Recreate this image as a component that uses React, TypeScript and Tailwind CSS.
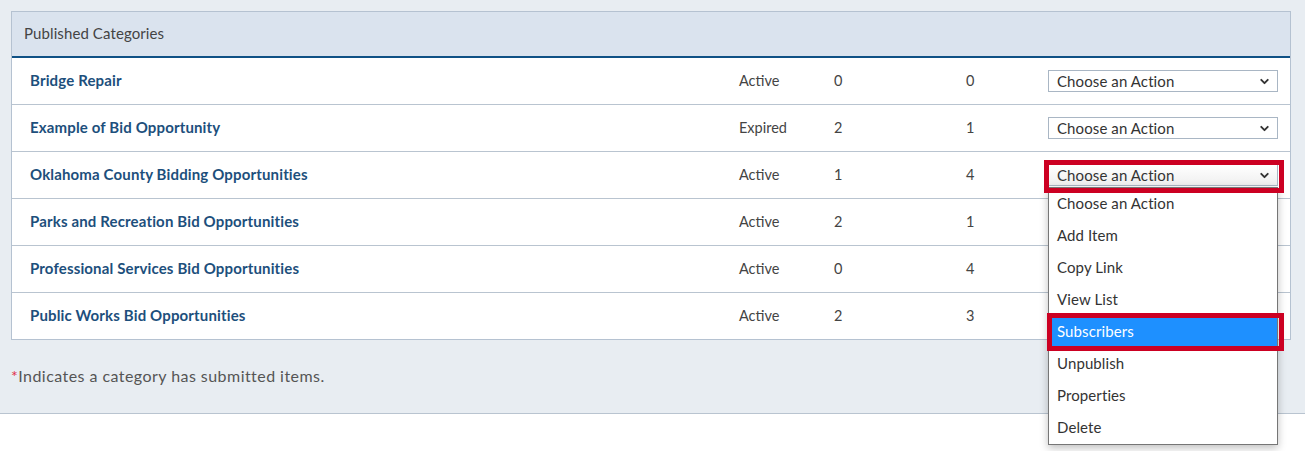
import { ChevronDown } from "lucide-react"

interface Category {
  name: string
  status: string
  items: number
  subscribers: number
}

const categories: Category[] = [
  { name: "Bridge Repair", status: "Active", items: 0, subscribers: 0 },
  { name: "Example of Bid Opportunity", status: "Expired", items: 2, subscribers: 1 },
  { name: "Oklahoma County Bidding Opportunities", status: "Active", items: 1, subscribers: 4 },
  { name: "Parks and Recreation Bid Opportunities", status: "Active", items: 2, subscribers: 1 },
  { name: "Professional Services Bid Opportunities", status: "Active", items: 0, subscribers: 4 },
  { name: "Public Works Bid Opportunities", status: "Active", items: 2, subscribers: 3 },
]

const actions = [
  "Choose an Action",
  "Add Item",
  "Copy Link",
  "View List",
  "Subscribers",
  "Unpublish",
  "Properties",
  "Delete",
]

function ActionSelect({ open = false }: { open?: boolean }) {
  return (
    <div
      className={
        "flex h-[22px] w-[230px] items-center justify-between border border-[#a9b6c4] pl-[8px] pr-[6px] text-[15px] leading-none text-[#333] " +
        (open ? "bg-gradient-to-b from-white to-[#efefef]" : "bg-white")
      }
    >
      <span className="tracking-[0.1px]">Choose an Action</span>
      <ChevronDown size={13} strokeWidth={3.5} className="text-[#333]" />
    </div>
  )
}

export default function App() {
  return (
    <div className="relative h-[451px] w-[1305px] overflow-hidden bg-white font-['Lato',sans-serif]">
      <div className="h-[414px] border-b border-[#b9c4d0] bg-[#e8edf2] pt-[11px]">
        <div className="ml-[11px] w-[1280px] border border-[#b5c2d1] bg-white">
          <div className="flex h-[46px] items-center border-b-2 border-[#0f5185] bg-[#dae3ee] pb-[1px] pl-[12px] text-[15px] tracking-[0.1px] text-[#444]">
            Published Categories
          </div>
          {categories.map((c, i) => (
            <div
              key={c.name}
              className={
                "grid grid-cols-[709px_95px_132px_82px_230px] items-center pl-[18px] text-[14.5px] " +
                (i < categories.length - 1 ? "h-[47px] border-b border-[#b9c4d0]" : "h-[46px]")
              }
            >
              <span className="pb-[2px] text-[15px] font-bold tracking-[0.15px] text-[#1d4f7c]">{c.name}</span>
              <span className="text-[#444]">{c.status}</span>
              <span className="pb-[1px] text-[#444]">{c.items}</span>
              <span className="pb-[1px] text-[#444]">{c.subscribers}</span>
              <ActionSelect open={i === 2} />
            </div>
          ))}
        </div>
        <p className="mt-[25px] pl-[11px] text-[16px] leading-[22px] tracking-[0.45px] text-[#555]">
          <span className="text-[#e0304a]">*</span>Indicates a category has submitted items.
        </p>
      </div>

      {/* open dropdown list */}
      <div className="absolute left-[1048px] top-[187px] w-[230px] border border-[#767676] bg-white text-[15px] text-[#333] shadow-[0_3px_8px_rgba(0,0,0,0.25)]">
        {actions.map((a) => (
          <div
            key={a}
            className={
              "flex h-[32px] items-center pb-[1px] pl-[8px] tracking-[0.1px] " +
              (a === "Subscribers" ? "bg-[#1e90ff] text-white" : "")
            }
          >
            {a}
          </div>
        ))}
      </div>

      {/* red callouts */}
      <div className="pointer-events-none absolute left-[1044px] top-[160px] h-[33px] w-[240px] border-[5px] border-[#cc0022]" />
      <div className="pointer-events-none absolute left-[1047px] top-[313px] h-[38px] w-[237px] border-[5px] border-[#cc0022]" />
    </div>
  )
}
